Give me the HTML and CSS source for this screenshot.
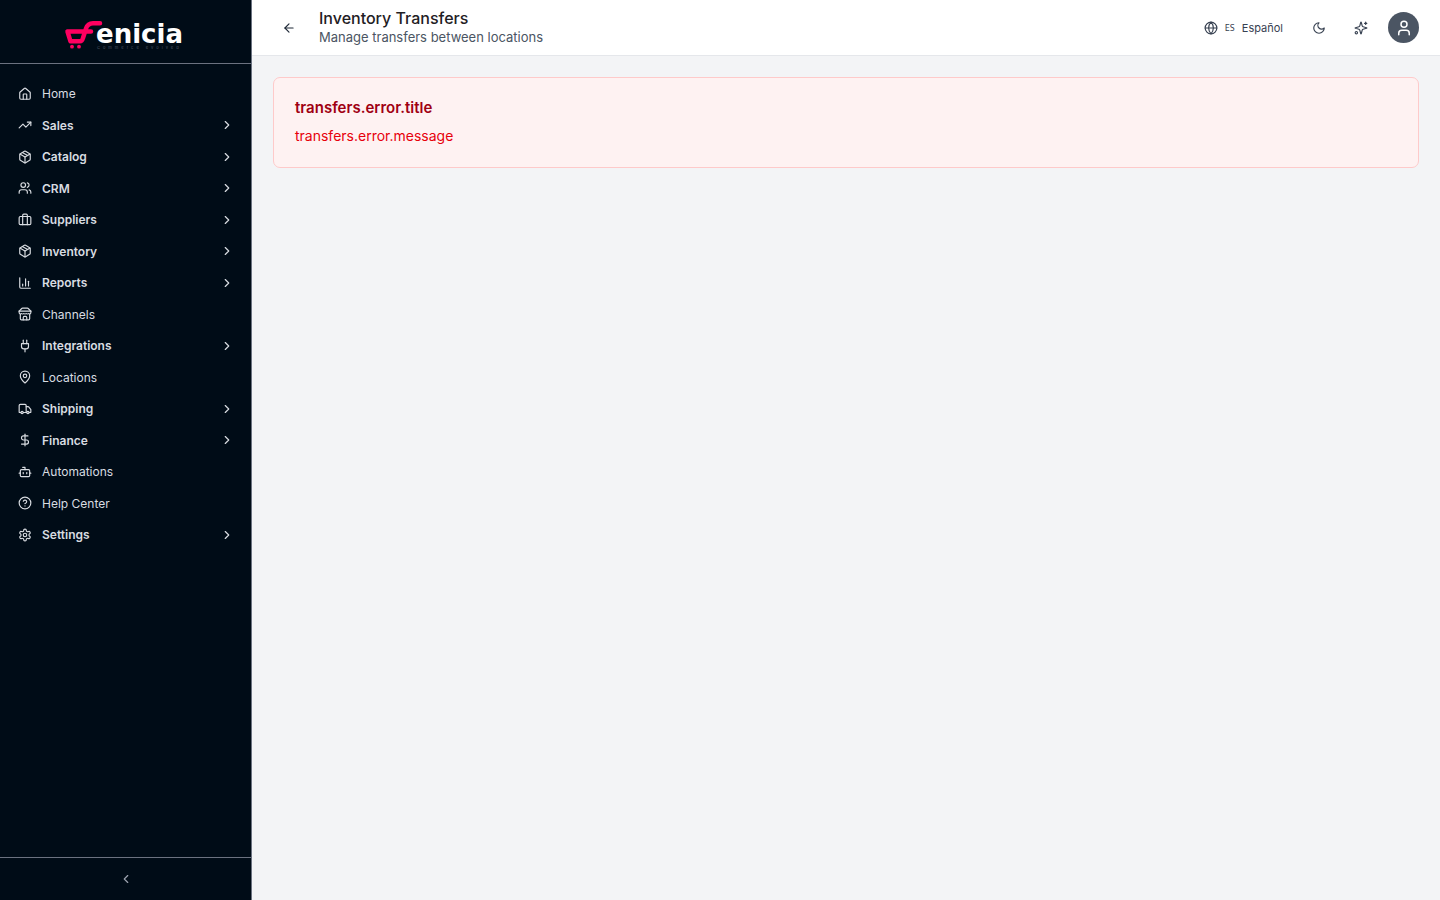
FILE: index.html
```html
<!DOCTYPE html>
<html lang="en">
<head>
<meta charset="utf-8">
<title>Inventory Transfers</title>
<link rel="stylesheet" href="styles.css">
</head>
<body>
<svg class="sprite" aria-hidden="true">
  <symbol id="chevron" viewBox="0 0 24 24"><path d="m9 18 6-6-6-6"/></symbol>
  <symbol id="box" viewBox="0 0 24 24"><path d="m7.5 4.27 9 5.15"/><path d="M21 8a2 2 0 0 0-1-1.73l-7-4a2 2 0 0 0-2 0l-7 4A2 2 0 0 0 3 8v8a2 2 0 0 0 1 1.73l7 4a2 2 0 0 0 2 0l7-4A2 2 0 0 0 21 16Z"/><path d="m3.3 7 8.7 5 8.7-5"/><path d="M12 22V12"/></symbol>
</svg>
<div class="app">
  <aside class="sidebar">
    <div class="brand">
      <svg class="logo" viewBox="0 0 132 40" role="img" aria-label="Fenicia">
        <g fill="none" stroke="#ff0060" stroke-linecap="round" stroke-linejoin="round">
          <path stroke-width="4.500" d="M40 7.200H33C29 7.200 27 9.500 26 12.500L23 22C22.300 24.500 21.500 25.300 20 25.300H10.500L7.500 15.500H31"/>
        </g>
        <circle cx="12" cy="30.700" r="1.900" fill="#ff0060"/><circle cx="19" cy="30.700" r="1.900" fill="#ff0060"/>
        <text class="wordmark" x="36" y="27">enicia</text>
        <text class="tagline" x="37" y="33">Commerce evolved</text>
      </svg>
    </div>
    <nav class="nav" aria-label="Main">
      <a class="item" href="#"><svg class="icon" viewBox="0 0 24 24"><path d="M15 21v-8a1 1 0 0 0-1-1h-4a1 1 0 0 0-1 1v8"/><path d="M3 10a2 2 0 0 1 .709-1.528l7-6a2 2 0 0 1 2.582 0l7 6A2 2 0 0 1 21 10v9a2 2 0 0 1-2 2H5a2 2 0 0 1-2-2z"/></svg><span>Home</span></a>
      <button class="item group"><svg class="icon" viewBox="0 0 24 24"><path d="M22 7 13.500 15.500l-5-5L2 17"/><path d="M16 7h6v6"/></svg><span>Sales</span><svg class="icon arrow"><use href="#chevron"/></svg></button>
      <button class="item group"><svg class="icon"><use href="#box"/></svg><span>Catalog</span><svg class="icon arrow"><use href="#chevron"/></svg></button>
      <button class="item group"><svg class="icon" viewBox="0 0 24 24"><path d="M16 21v-2a4 4 0 0 0-4-4H6a4 4 0 0 0-4 4v2"/><circle cx="9" cy="7" r="4"/><path d="M22 21v-2a4 4 0 0 0-3-3.870"/><path d="M16 3.130a4 4 0 0 1 0 7.750"/></svg><span>CRM</span><svg class="icon arrow"><use href="#chevron"/></svg></button>
      <button class="item group"><svg class="icon" viewBox="0 0 24 24"><rect x="2" y="6" width="20" height="14" rx="2"/><path d="M8 20V4a2 2 0 0 1 2-2h4a2 2 0 0 1 2 2v16"/></svg><span>Suppliers</span><svg class="icon arrow"><use href="#chevron"/></svg></button>
      <button class="item group"><svg class="icon"><use href="#box"/></svg><span>Inventory</span><svg class="icon arrow"><use href="#chevron"/></svg></button>
      <button class="item group"><svg class="icon" viewBox="0 0 24 24"><path d="M3 3v16a2 2 0 0 0 2 2h16"/><path d="M18 17V9"/><path d="M13 17V5"/><path d="M8 17v-3"/></svg><span>Reports</span><svg class="icon arrow"><use href="#chevron"/></svg></button>
      <a class="item" href="#"><svg class="icon" viewBox="0 0 24 24"><path d="m2 7 4.410-4.410A2 2 0 0 1 7.830 2h8.340a2 2 0 0 1 1.420.590L22 7"/><path d="M4 12v8a2 2 0 0 0 2 2h12a2 2 0 0 0 2-2v-8"/><path d="M15 22v-4a2 2 0 0 0-2-2h-2a2 2 0 0 0-2 2v4"/><path d="M2 7h20"/><path d="M22 7v3a2 2 0 0 1-2 2a2.700 2.700 0 0 1-1.590-.630.700.700 0 0 0-.820 0A2.700 2.700 0 0 1 16 12a2.700 2.700 0 0 1-1.590-.630.700.700 0 0 0-.820 0A2.700 2.700 0 0 1 12 12a2.700 2.700 0 0 1-1.590-.630.700.700 0 0 0-.820 0A2.700 2.700 0 0 1 8 12a2.700 2.700 0 0 1-1.590-.630.700.700 0 0 0-.820 0A2.700 2.700 0 0 1 4 12a2 2 0 0 1-2-2V7"/></svg><span>Channels</span></a>
      <button class="item group"><svg class="icon" viewBox="0 0 24 24"><path d="M12 22v-5"/><path d="M9 8V2"/><path d="M15 8V2"/><path d="M18 8v5a4 4 0 0 1-4 4h-4a4 4 0 0 1-4-4V8Z"/></svg><span>Integrations</span><svg class="icon arrow"><use href="#chevron"/></svg></button>
      <a class="item" href="#"><svg class="icon" viewBox="0 0 24 24"><path d="M20 10c0 4.993-5.539 10.193-7.399 11.799a1 1 0 0 1-1.202 0C9.539 20.193 4 14.993 4 10a8 8 0 0 1 16 0"/><circle cx="12" cy="10" r="3"/></svg><span>Locations</span></a>
      <button class="item group"><svg class="icon" viewBox="0 0 24 24"><path d="M14 18V6a2 2 0 0 0-2-2H4a2 2 0 0 0-2 2v11a1 1 0 0 0 1 1h2"/><path d="M15 18H9"/><path d="M19 18h2a1 1 0 0 0 1-1v-3.650a1 1 0 0 0-.220-.624l-3.480-4.350A1 1 0 0 0 17.520 8H14"/><circle cx="17" cy="18" r="2"/><circle cx="7" cy="18" r="2"/></svg><span>Shipping</span><svg class="icon arrow"><use href="#chevron"/></svg></button>
      <button class="item group"><svg class="icon" viewBox="0 0 24 24"><path d="M12 2v20"/><path d="M17 5H9.500a3.500 3.500 0 0 0 0 7h5a3.500 3.500 0 0 1 0 7H6"/></svg><span>Finance</span><svg class="icon arrow"><use href="#chevron"/></svg></button>
      <a class="item" href="#"><svg class="icon" viewBox="0 0 24 24"><path d="M12 8V4H8"/><rect width="16" height="12" x="4" y="8" rx="2"/><path d="M2 14h2"/><path d="M20 14h2"/><path d="M15 13v2"/><path d="M9 13v2"/></svg><span>Automations</span></a>
      <a class="item" href="#"><svg class="icon" viewBox="0 0 24 24"><circle cx="12" cy="12" r="10"/><path d="M9.090 9a3 3 0 0 1 5.830 1c0 2-3 3-3 3"/><path d="M12 17h.01"/></svg><span>Help Center</span></a>
      <button class="item group"><svg class="icon" viewBox="0 0 24 24"><path d="M12.220 2h-.440a2 2 0 0 0-2 2v.180a2 2 0 0 1-1 1.730l-.430.250a2 2 0 0 1-2 0l-.150-.080a2 2 0 0 0-2.730.730l-.220.380a2 2 0 0 0 .730 2.730l.150.100a2 2 0 0 1 1 1.720v.510a2 2 0 0 1-1 1.740l-.150.090a2 2 0 0 0-.730 2.730l.220.380a2 2 0 0 0 2.730.730l.150-.080a2 2 0 0 1 2 0l.430.250a2 2 0 0 1 1 1.730V20a2 2 0 0 0 2 2h.440a2 2 0 0 0 2-2v-.180a2 2 0 0 1 1-1.730l.430-.250a2 2 0 0 1 2 0l.150.080a2 2 0 0 0 2.730-.730l.220-.390a2 2 0 0 0-.730-2.730l-.150-.080a2 2 0 0 1-1-1.740v-.500a2 2 0 0 1 1-1.740l.150-.090a2 2 0 0 0 .730-2.730l-.220-.380a2 2 0 0 0-2.730-.730l-.150.080a2 2 0 0 1-2 0l-.430-.250a2 2 0 0 1-1-1.730V4a2 2 0 0 0-2-2z"/><circle cx="12" cy="12" r="3"/></svg><span>Settings</span><svg class="icon arrow"><use href="#chevron"/></svg></button>
    </nav>
    <div class="collapse"><button class="collapse-button" aria-label="Collapse sidebar"><svg class="icon" viewBox="0 0 24 24"><path d="m15 18-6-6 6-6"/></svg></button></div>
  </aside>
  <div class="page">
    <header class="topbar">
      <button class="back" aria-label="Back"><svg class="icon" viewBox="0 0 24 24"><path d="m12 19-7-7 7-7"/><path d="M19 12H5"/></svg></button>
      <div class="heading">
        <h1>Inventory Transfers</h1>
        <p>Manage transfers between locations</p>
      </div>
      <div class="tools">
        <button class="language"><svg class="icon" viewBox="0 0 24 24"><circle cx="12" cy="12" r="10"/><path d="M12 2a14.500 14.500 0 0 0 0 20 14.500 14.500 0 0 0 0-20"/><path d="M2 12h20"/></svg><span class="code">ES</span><span>Español</span></button>
        <button class="tool" aria-label="Dark mode"><svg class="icon" viewBox="0 0 24 24"><path d="M12 3a6 6 0 0 0 9 9 9 9 0 1 1-9-9Z"/></svg></button>
        <button class="tool" aria-label="Assistant"><svg class="icon" viewBox="0 0 24 24"><path d="M9.937 15.500A2 2 0 0 0 8.500 14.063l-6.135-1.582a.5.5 0 0 1 0-.962L8.500 9.936A2 2 0 0 0 9.937 8.500l1.582-6.135a.5.5 0 0 1 .963 0L14.063 8.500A2 2 0 0 0 15.500 9.937l6.135 1.581a.5.5 0 0 1 0 .964L15.500 14.063a2 2 0 0 0-1.437 1.437l-1.582 6.135a.5.5 0 0 1-.963 0z"/><path d="M20 2v4"/><path d="M22 4h-4"/><circle cx="4" cy="20" r="2"/></svg></button>
        <button class="avatar" aria-label="Account"><svg class="icon" viewBox="0 0 24 24"><path d="M19 21v-2a4 4 0 0 0-4-4H9a4 4 0 0 0-4 4v2"/><circle cx="12" cy="7" r="4"/></svg></button>
      </div>
    </header>
    <main class="content">
      <section class="alert" role="alert">
        <h2>transfers.error.title</h2>
        <p>transfers.error.message</p>
      </section>
    </main>
  </div>
</div>
</body>
</html>
```

FILE: styles.css
```css
* { box-sizing: border-box; }
body { margin: 0; font-family: Inter, "Liberation Sans", sans-serif; background: #f3f4f6; }
h1, h2, p { margin: 0; }
button { border: 0; padding: 0; background: none; color: inherit; font: inherit; cursor: pointer; }
a { color: inherit; text-decoration: none; }
.sprite { position: absolute; width: 0; height: 0; }
.icon { width: 14px; height: 14px; flex: none; fill: none; stroke: currentColor; stroke-width: 2; stroke-linecap: round; stroke-linejoin: round; }

.app { display: flex; min-height: 100vh; }
.sidebar { display: flex; flex-direction: column; flex: none; width: 252px; background: #000c17; color: #d8dce1; border-right: 1px solid #6b7280; }
.brand { display: flex; justify-content: center; height: 64px; padding-top: 16px; border-bottom: 1px solid #6b7280; }
.logo { width: 132px; height: 40px; overflow: visible; }
.wordmark { font-family: "DejaVu Sans", sans-serif; font-size: 26px; font-weight: 700; fill: #fff; }
.tagline { font-size: 4px; letter-spacing: 3px; fill: #4b5563; }

.nav { display: flex; flex-direction: column; flex: 1; padding: 14px 9px 14px 10px; }
.item { display: flex; align-items: center; gap: 10px; height: 31px; padding: 0 8px; font-size: 12px; text-align: left; }
.item:nth-child(even) { height: 32px; }
.group { font-weight: 600; }
.arrow { margin-left: auto; }
.collapse { display: flex; height: 43px; border-top: 1px solid #6b7280; }
.collapse-button { display: flex; flex: 1; align-items: center; justify-content: center; color: #9ca3af; }

.page { flex: 1; min-width: 0; }
.topbar { display: flex; align-items: center; height: 56px; padding: 0 21px; background: #fff; border-bottom: 1px solid #e5e7eb; }
.back { display: grid; place-items: center; width: 32px; height: 32px; margin-right: 14px; color: #1f2937; }
.heading { flex: 1; padding-bottom: 2px; }
.heading h1 { font-size: 16px; line-height: 20px; font-weight: 500; color: #1f2024; }
.heading p { font-size: 13px; line-height: 18px; color: #4b5563; }
.tools { display: flex; align-items: center; color: #374151; }
.language { display: flex; align-items: center; gap: 7px; margin-right: 22px; font-size: 11px; }
.code { font-family: "Noto Sans", sans-serif; font-size: 9px; line-height: 12px; }
.tool { display: grid; place-items: center; width: 28px; height: 28px; margin-right: 14px; }
.tool:nth-child(3) { margin-right: 13px; }
.avatar { display: grid; place-items: center; width: 31px; height: 31px; border-radius: 50%; background: #4b5563; color: #fff; }
.avatar .icon { width: 18px; height: 18px; }

.content { padding: 21px; }
.alert { padding: 20px 21px; border: 1px solid #fecaca; border-radius: 7px; background: #fef2f2; }
.alert h2 { margin-bottom: 7px; font-size: 15px; line-height: 20px; font-weight: 600; color: #a00012; }
.alert p { font-size: 14px; line-height: 22px; color: #e7000b; }
```
